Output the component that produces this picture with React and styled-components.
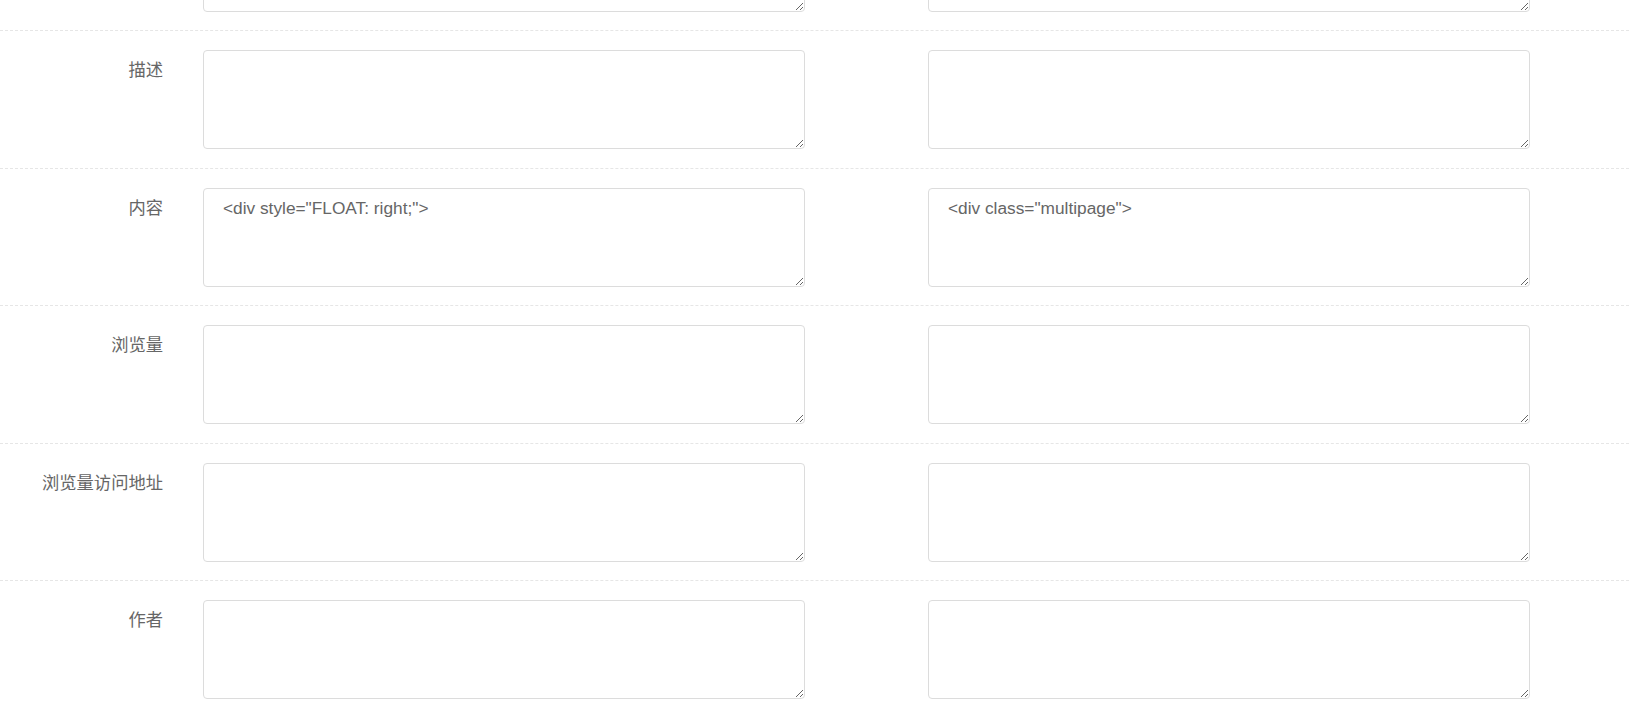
import React from 'react';
import styled, { createGlobalStyle } from 'styled-components';

const GlobalStyle = createGlobalStyle`
  html, body {
    margin: 0;
    padding: 0;
    background: #ffffff;
    overflow: hidden;
  }
  body {
    font-family: "Liberation Sans", "Noto Sans CJK SC", sans-serif;
    font-size: 17.3px;
    color: #666666;
  }
`;

// the page is scrolled down a little, so the first row is only partly shown
const Form = styled.div`
  margin-top: -106.5px;
`;

const Row = styled.div`
  display: grid;
  grid-template-columns: 203px 725px 602px;
  align-items: start;
  padding: 19px 0 18.5px;
  border-bottom: 1px dashed #e6e6e6;
`;

const Label = styled.label`
  padding: 10px 40px 0 0;
  line-height: 20px;
  font-size: 17.3px;
  text-align: right;
  color: #666666;
  font-family: "Liberation Sans", "Noto Sans CJK SC", sans-serif;
`;

const Field = styled.textarea`
  box-sizing: border-box;
  display: block;
  width: 602px;
  height: 99px;
  margin: 0;
  padding: 9px 19px;
  border: 1px solid #dcdcdc;
  border-radius: 4px;
  background: #ffffff;
  color: #666666;
  font-family: "Liberation Sans", "Noto Sans CJK SC", sans-serif;
  font-size: 17.3px;
  line-height: 20px;
  outline: none;
  resize: vertical;
`;

const rows = [
  { label: '标题', left: '', right: '' },
  { label: '描述', left: '', right: '' },
  { label: '内容', left: '<div style="FLOAT: right;">', right: '<div class="multipage">' },
  { label: '浏览量', left: '', right: '' },
  { label: '浏览量访问地址', left: '', right: '' },
  { label: '作者', left: '', right: '' },
];

export default function App() {
  return (
    <>
      <GlobalStyle />
      <Form>
        {rows.map((r, i) => (
          <Row key={i}>
            <Label>{i === 0 ? '' : r.label}</Label>
            <Field defaultValue={r.left} />
            <Field defaultValue={r.right} />
          </Row>
        ))}
      </Form>
    </>
  );
}
